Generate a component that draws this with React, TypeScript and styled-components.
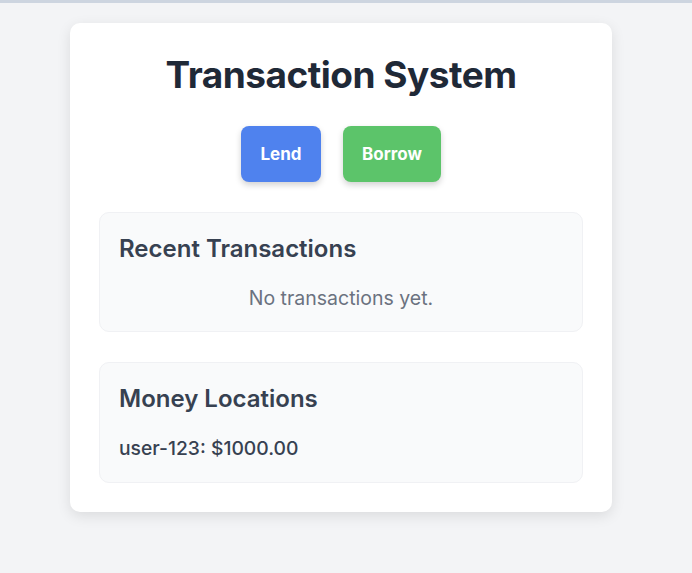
import React from "react";
import styled, { createGlobalStyle } from "styled-components";

const GlobalStyle = createGlobalStyle`
    html, body {
        margin: 0;
        padding: 0;
        background-color: #f3f4f6;
        font-family: Inter, "Noto Sans", "Liberation Sans", sans-serif;
    }
`;

const TopBar = styled.div`
    height: 3px;
    background-color: #cdd5e0;
`;

const Page = styled.div`
    display: flex;
    justify-content: flex-start;
    padding: 20px 80px 40px 70px;
`;

const Card = styled.div`
    width: 542px;
    box-sizing: border-box;
    background-color: #ffffff;
    border-radius: 10px;
    box-shadow: 0 4px 14px rgba(0, 0, 0, 0.1);
    padding: 29px 29px 29px;
    display: flex;
    flex-direction: column;
`;

const Title = styled.h1`
    margin: 0;
    font-size: 37px;
    line-height: 46px;
    font-weight: 700;
    color: #1f2937;
    text-align: center;
    letter-spacing: -0.5px;
`;

const Actions = styled.div`
    display: flex;
    justify-content: center;
    gap: 22px;
    margin-top: 28px;
`;

const ActionButton = styled.button<{ $color: string; $width: number }>`
    width: ${(p) => p.$width}px;
    height: 56px;
    border: none;
    border-radius: 8px;
    background-color: ${(p) => p.$color};
    color: #ffffff;
    font-family: Inter, "Noto Sans", "Liberation Sans", sans-serif;
    font-size: 17px;
    font-weight: 700;
    box-shadow: 0 3px 6px rgba(0, 0, 0, 0.18);
    cursor: pointer;
`;

const Section = styled.section<{ $gapTop: number }>`
    margin-top: ${(p) => p.$gapTop}px;
    background-color: #f9fafb;
    border: 1px solid #f0f1f4;
    border-radius: 10px;
    padding: 20px 19px 19px;
`;

const SectionTitle = styled.h2`
    margin: 0;
    font-size: 24px;
    line-height: 31px;
    font-weight: 600;
    color: #374151;
`;

const Empty = styled.p`
    margin: 20px 0 0;
    font-size: 19.5px;
    line-height: 28px;
    color: #6b7280;
    text-align: center;
`;

const Balance = styled.p`
    margin: 20px 0 0;
    font-size: 19.3px;
    line-height: 29px;
    font-weight: 500;
    color: #374151;
`;

const locations = [{ id: "user-123", amount: 1000 }];

export default function App() {
    return (
        <>
            <GlobalStyle />
            <TopBar />
            <Page>
                <Card>
                    <Title>Transaction System</Title>
                    <Actions>
                        <ActionButton $color="#4f82ee" $width={80}>Lend</ActionButton>
                        <ActionButton $color="#5cc46a" $width={98}>Borrow</ActionButton>
                    </Actions>
                    <Section $gapTop={30}>
                        <SectionTitle>Recent Transactions</SectionTitle>
                        <Empty>No transactions yet.</Empty>
                    </Section>
                    <Section $gapTop={30}>
                        <SectionTitle>Money Locations</SectionTitle>
                        {locations.map((loc) => (
                            <Balance key={loc.id}>
                                {loc.id}: ${loc.amount.toFixed(2)}
                            </Balance>
                        ))}
                    </Section>
                </Card>
            </Page>
        </>
    );
}
